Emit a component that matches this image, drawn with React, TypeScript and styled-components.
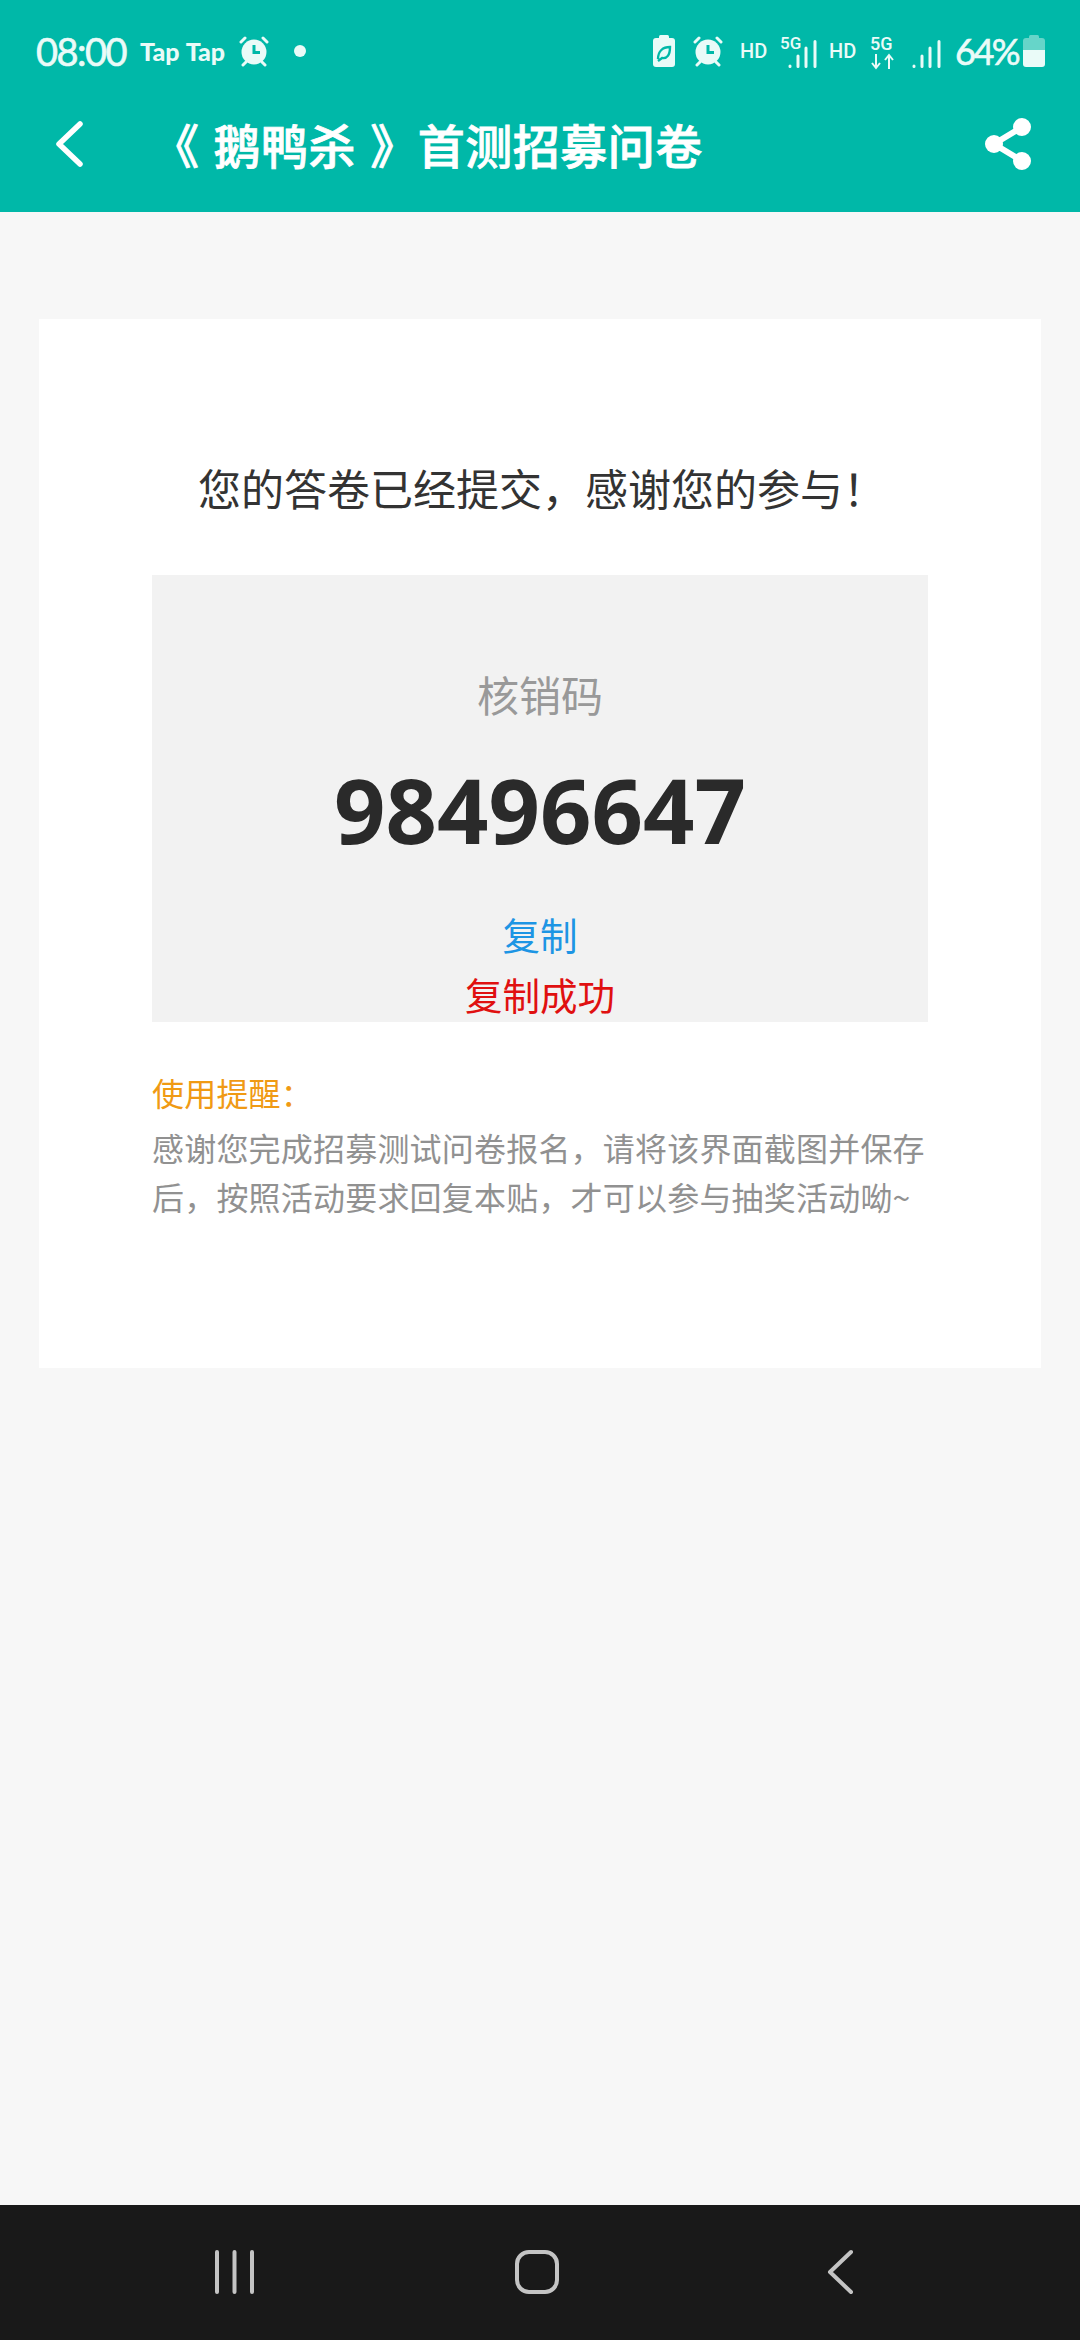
import styled, { createGlobalStyle } from "styled-components";

const GlobalStyle = createGlobalStyle`
  html, body {
    margin: 0;
    padding: 0;
    background: #f7f7f7;
  }
  * {
    box-sizing: border-box;
  }
`;

const CJK = `"Noto Sans CJK SC", "Noto Sans", sans-serif`;

// full-width punctuation, written as escapes so it can't turn into ascii by accident
const COMMA = "\uFF0C";
const BANG = "\uFF01";
const COLON = "\uFF1A";

const Page = styled.div`
  width: 1080px;
  height: 2340px;
  display: flex;
  flex-direction: column;
  background: #f7f7f7;
  font-family: ${CJK};
`;

const Top = styled.header`
  height: 212px;
  flex: none;
  background: #00b8a8;
  color: #eafbf8;
`;

const StatusBar = styled.div`
  height: 102px;
  padding: 0 35px 0 36px;
  display: flex;
  align-items: center;
`;

const Clock = styled.span`
  font-family: "Lato", sans-serif;
  font-size: 38px;
  letter-spacing: -1.5px;
  -webkit-text-stroke: 0.6px #eafbf8;
  width: 104px;
`;

const AppName = styled.span`
  font-family: "Lato", sans-serif;
  font-weight: 900;
  font-size: 25px;
  width: 98px;
  white-space: nowrap;
  word-spacing: 1px;
`;

const Dot = styled.i`
  width: 12px;
  height: 12px;
  margin-left: 24px;
  border-radius: 50%;
  background: #eafbf8;
`;

const Spacer = styled.div`
  flex: 1;
`;

const Hd = styled.span<{ $left: number }>`
  font-family: "Roboto", sans-serif;
  font-weight: 500;
  font-size: 20px;
  width: 26px;
  white-space: nowrap;
  margin-left: ${(p) => p.$left}px;
`;

const Percent = styled.span`
  font-family: "Lato", sans-serif;
  font-size: 36px;
  margin-left: 13px;
  letter-spacing: -2.5px;
  -webkit-text-stroke: 0.6px #eafbf8;
  width: 68px;
  white-space: nowrap;
`;

const IconSlot = styled.svg<{ $left?: number }>`
  flex: none;
  display: block;
  margin-left: ${(p) => p.$left ?? 0}px;
`;

const NavRow = styled.div`
  height: 84px;
  padding: 0 46px 0 50px;
  display: flex;
  align-items: center;
`;

const Title = styled.h1`
  margin: 0 0 0 66px;
  flex: 1;
  font-size: 47px;
  line-height: 84px;
  font-weight: 500;
  color: #fff;
  white-space: nowrap;
  letter-spacing: 0.5px;
  word-spacing: 3px;
  -webkit-text-stroke: 0.8px #fff;
`;

const Main = styled.main`
  flex: 1;
  padding: 107px 39px 0;
`;

const Card = styled.section`
  height: 1049px;
  padding: 135px 113px 0;
  background: #fff;
`;

const Heading = styled.h2`
  margin: 0;
  padding-left: 46px;
  height: 68px;
  line-height: 66px;
  font-size: 43px;
  font-weight: 400;
  color: #333;
  white-space: nowrap;
`;

const CodeBox = styled.div`
  height: 447px;
  margin-top: 53px;
  padding-top: 88px;
  display: flex;
  flex-direction: column;
  align-items: center;
  background: #f2f2f2;
  overflow: hidden;
`;

const CodeLabel = styled.div`
  font-size: 42px;
  line-height: 62px;
  color: #999;
`;

const CodeValue = styled.div`
  margin-top: 25px;
  font-family: "Noto Sans", sans-serif;
  font-size: 90px;
  font-weight: 700;
  line-height: 118px;
  color: #2a2a2a;
`;

const StatusLine = styled.div<{ $color: string }>`
  font-size: 37.5px;
  line-height: 60px;
  color: ${(p) => p.$color};
`;

const CopyLink = styled(StatusLine)`
  margin-top: 36px;
`;

const Notice = styled.div`
  margin-top: 45px;
  font-size: 32px;
  letter-spacing: 0.2px;
  line-height: 49px;
  color: #919191;
`;

const NoticeTitle = styled.div`
  color: #f09a14;
  line-height: 50px;
  margin-bottom: 6px;
`;

const BottomBar = styled.footer`
  height: 135px;
  flex: none;
  background: #191919;
  display: flex;
  align-items: flex-start;
  padding: 44px 0 0 214px;
  color: #c4c4c4;
`;

const AlarmIcon = ({ left }: { left?: number }) => (
  <IconSlot $left={left} width="32" height="32" viewBox="0 0 32 32">
    <circle cx="16" cy="17" r="12.500" fill="#eafbf8" />
    <path d="M16 10v7.500h6" fill="none" stroke="#00b8a8" strokeWidth="3" />
    <path d="M3 7l4-4M29 7l-4-4M8 27l-3 3M24 27l3 3" stroke="#eafbf8" strokeWidth="3" strokeLinecap="round" />
  </IconSlot>
);

const LeafBattery = ({ left }: { left?: number }) => (
  <IconSlot $left={left} width="22" height="32" viewBox="0 0 22 32">
    <rect x="6" y="0" width="10" height="4" rx="1.500" fill="#eafbf8" />
    <rect x="0" y="3" width="22" height="29" rx="3" fill="#eafbf8" />
    <path d="M5 24c0-8 5-12 12-12 0 8-3 12-8 11l-4 3" fill="none" stroke="#00b8a8" strokeWidth="2.400" />
  </IconSlot>
);

const Signal = ({ left, five }: { left?: number; five?: boolean }) => (
  <IconSlot $left={left} width={five ? 38 : 30} height="34" viewBox={five ? "0 0 38 34" : "0 0 30 34"}>
    {five && (
      <text x="0" y="15" fontFamily="Roboto, sans-serif" fontWeight="500" fontSize="17" fill="#eafbf8">
        5G
      </text>
    )}
    <g transform={five ? "translate(8 0)" : "translate(0 0)"} stroke="#eafbf8" strokeWidth="3" strokeLinecap="round">
      <path d="M2 32v.5M10 22v10.500M18 14v18.500M27 7.500v25" />
    </g>
  </IconSlot>
);

const FiveGArrows = ({ left }: { left?: number }) => (
  <IconSlot $left={left} width="26" height="40" viewBox="0 0 26 40">
    <text x="0" y="19" fontFamily="Roboto, sans-serif" fontWeight="500" fontSize="18" fill="#eafbf8">
      5G
    </text>
    <path d="M6 23v14M2 32l4 5 4-5M19 38V24M15 29l4-5 4 5" fill="none" stroke="#eafbf8" strokeWidth="2" />
  </IconSlot>
);

const Battery = () => (
  <IconSlot width="22" height="32" viewBox="0 0 22 32">
    <rect x="6" y="0" width="10" height="4" rx="1.500" fill="#66d5c9" />
    <path d="M0 6a3 3 0 0 1 3-3h16a3 3 0 0 1 3 3v9H0z" fill="#66d5c9" />
    <path d="M0 15h22v14a3 3 0 0 1-3 3H3a3 3 0 0 1-3-3z" fill="#eafbf8" />
  </IconSlot>
);

const BackIcon = () => (
  <IconSlot width="36" height="50" viewBox="0 0 36 50">
    <path d="M30 5L9 25l21 20" fill="none" stroke="#fff" strokeWidth="5.500" strokeLinecap="round" strokeLinejoin="round" />
  </IconSlot>
);

const ShareIcon = () => (
  <IconSlot width="50" height="54" viewBox="0 0 50 54">
    <path d="M38 10L10 27l28 17" fill="none" stroke="#fff" strokeWidth="6" />
    <circle cx="38" cy="10" r="9" fill="#fff" />
    <circle cx="10" cy="27" r="9" fill="#fff" />
    <circle cx="38" cy="44" r="9" fill="#fff" />
  </IconSlot>
);

const RecentsIcon = () => (
  <IconSlot width="42" height="46" viewBox="0 0 42 46">
    <path d="M3 3v40M20.500 3v40M38 3v40" stroke="currentColor" strokeWidth="4" strokeLinecap="round" />
  </IconSlot>
);

const HomeIcon = () => (
  <IconSlot $left={258} width="46" height="46" viewBox="0 0 46 46">
    <rect x="3" y="3" width="40" height="40" rx="12" fill="none" stroke="currentColor" strokeWidth="4" />
  </IconSlot>
);

const NavBackIcon = () => (
  <IconSlot $left={264} width="30" height="48" viewBox="0 0 30 48">
    <path d="M27 3L6 23l21 20" fill="none" stroke="currentColor" strokeWidth="4" strokeLinecap="round" strokeLinejoin="round" />
  </IconSlot>
);

export default function App() {
  return (
    <>
      <GlobalStyle />
      <Page>
        <Top>
          <StatusBar>
            <Clock>08:00</Clock>
            <AppName>Tap Tap</AppName>
            <AlarmIcon />
            <Dot />
            <Spacer />
            <LeafBattery />
            <AlarmIcon left={17} />
            <Hd $left={16}>HD</Hd>
            <Signal left={14} five />
            <Hd $left={11}>HD</Hd>
            <FiveGArrows left={15} />
            <Signal left={16} />
            <Percent>64%</Percent>
            <Battery />
          </StatusBar>
          <NavRow>
            <BackIcon />
            <Title>《 鹅鸭杀 》首测招募问卷</Title>
            <ShareIcon />
          </NavRow>
        </Top>
        <Main>
          <Card>
            <Heading>{`您的答卷已经提交${COMMA}感谢您的参与${BANG}`}</Heading>
            <CodeBox>
              <CodeLabel>核销码</CodeLabel>
              <CodeValue>98496647</CodeValue>
              <CopyLink $color="#1d95e4">复制</CopyLink>
              <StatusLine $color="#e01010">复制成功</StatusLine>
            </CodeBox>
            <Notice>
              <NoticeTitle>{`使用提醒${COLON}`}</NoticeTitle>
              {`感谢您完成招募测试问卷报名${COMMA}请将该界面截图并保存后${COMMA}按照活动要求回复本贴${COMMA}才可以参与抽奖活动呦~`}
            </Notice>
          </Card>
        </Main>
        <BottomBar>
          <RecentsIcon />
          <HomeIcon />
          <NavBackIcon />
        </BottomBar>
      </Page>
    </>
  );
}
